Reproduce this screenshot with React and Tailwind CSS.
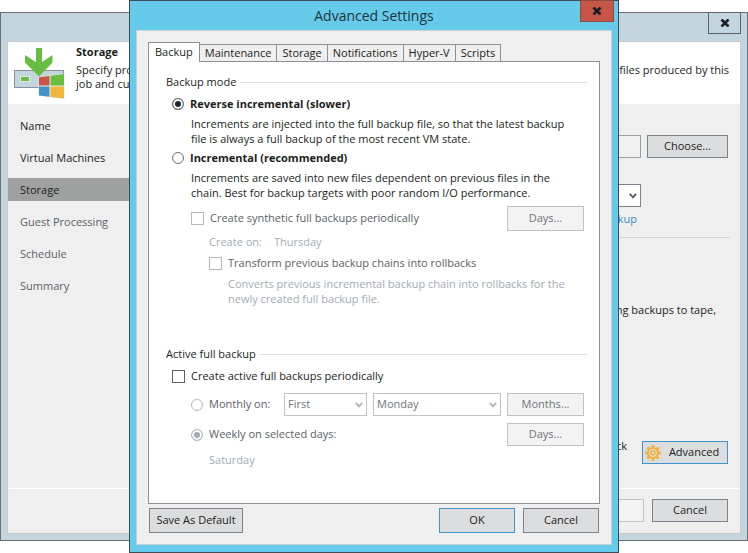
import { useState } from "react";
import clsx from "clsx";

const steps = [
  { name: "Name", state: "done" },
  { name: "Virtual Machines", state: "done" },
  { name: "Storage", state: "active" },
  { name: "Guest Processing", state: "pending" },
  { name: "Schedule", state: "pending" },
  { name: "Summary", state: "pending" },
];

const tabs = [
  "Backup",
  "Maintenance",
  "Storage",
  "Notifications",
  "Hyper-V",
  "Scripts",
];

function Button({ className, disabled, primary, children }) {
  return (
    <button
      disabled={disabled}
      className={clsx(
        "flex shrink-0 items-center justify-center border",
        disabled && "border-[#bfc3c6] bg-[#f3f3f3] text-[#6f7479]",
        !disabled && "bg-[#dcddde] text-[#1c1e20]",
        !disabled && (primary ? "border-[#3d94cf]" : "border-[#7c828a]"),
        className
      )}
    >
      {children}
    </button>
  );
}

function Chevron({ className }) {
  return (
    <svg
      viewBox="0 0 8 6"
      className={clsx("pointer-events-none absolute right-1 h-1.5 w-2", className)}
    >
      <path
        d="M0.8 0.8 L4 4.4 L7.2 0.8"
        fill="none"
        stroke="currentColor"
        strokeWidth="1.9"
      />
    </svg>
  );
}

function Select({ label, options, disabled, className }) {
  return (
    <div className={clsx("relative flex items-center", className)}>
      <select
        aria-label={label}
        disabled={disabled}
        className={clsx(
          "h-[23px] w-full appearance-none border bg-white pl-[3px] opacity-100",
          disabled
            ? "border-[#bfc3c6] text-[#6f7479]"
            : "border-[#7c828a] text-[#1c1e20]"
        )}
      >
        {options.map((option) => (
          <option key={option}>{option}</option>
        ))}
      </select>
      <Chevron className={disabled ? "text-[#b0b5b9]" : "text-[#5c6166]"} />
    </div>
  );
}

function Radio({ id, name, disabled, checked, onChange }) {
  return (
    <input
      id={id}
      type="radio"
      name={name}
      disabled={disabled}
      checked={checked}
      onChange={onChange}
      className="size-3 shrink-0 appearance-none rounded-full border border-[#6b7076] bg-white checked:bg-[#232527] checked:shadow-[inset_0_0_0_2px_white] disabled:border-[#b4b9bd] disabled:checked:bg-[#a3abb2]"
    />
  );
}

function Checkbox({ id, disabled }) {
  return (
    <input
      id={id}
      type="checkbox"
      disabled={disabled}
      className="size-[13px] shrink-0 appearance-none border border-[#5c6166] bg-white checked:bg-[#5c6166] checked:shadow-[inset_0_0_0_2px_white] disabled:border-[#b4b9bd]"
    />
  );
}

function GroupTitle({ className, children }) {
  return (
    <div className={clsx("flex items-center gap-1", className)}>
      <h3 className="leading-4">{children}</h3>
      <div className="h-px flex-1 bg-[#dfdfdf]" />
    </div>
  );
}

function CloseIcon() {
  return (
    <svg viewBox="0 0 10 8" className="h-2 w-2.5">
      <path
        d="M1.5 0.5 L8.5 7.5 M8.5 0.5 L1.5 7.5"
        stroke="#1c1e20"
        strokeWidth="2.7"
      />
    </svg>
  );
}

function StorageIcon() {
  return (
    <svg viewBox="0 0 52 52" className="size-[52px] shrink-0">
      <rect x="1.5" y="23.5" width="49" height="17" fill="#c3d6df" stroke="#8a8f9b" />
      <rect x="7.5" y="29.5" width="9" height="5" fill="#66bd3f" stroke="#dcebe4" />
      <path
        d="M23 1 H29 V15 L39.5 8 V15.5 L26 29.5 L12 15.5 V8 L23 15 Z"
        fill="#66bd3f"
      />
      <path d="M25.500 30 L51.500 26.500 V52 L25.500 49 Z" fill="#e6eef0" />
      <path d="M26 30.300 L36.500 29 V38.500 H26 Z" fill="#c85545" />
      <path d="M37.500 28.800 L51 27 V38.500 H37.500 Z" fill="#66bd3f" />
      <path d="M26 39.500 H36.500 V49.800 L26 48.500 Z" fill="#4592c6" />
      <path d="M37.500 39.500 H51 V51.500 L37.500 50 Z" fill="#f2b53c" />
    </svg>
  );
}

function GearIcon() {
  return (
    <svg viewBox="0 0 16 16" className="size-4" fill="none" stroke="#f2b33a">
      <circle cx="8" cy="8" r="5" strokeWidth="2.200" />
      <circle cx="8" cy="8" r="2" strokeWidth="1.500" />
      <path
        d="M8 0 V3 M8 13 V16 M0 8 H3 M13 8 H16 M2.300 2.300 L4.500 4.500 M11.500 11.500 L13.700 13.700 M2.300 13.700 L4.500 11.500 M11.500 4.500 L13.700 2.300"
        strokeWidth="2.600"
      />
    </svg>
  );
}

function WizardWindow() {
  return (
    <div className="flex flex-1 flex-col border border-[#6b6f74] bg-[#c3d6df] px-[6px] pb-[6px]">
      <div className="flex h-7 justify-end">
        <button
          aria-label="Close"
          className="-mt-px flex h-[22px] w-[33px] items-center justify-center border border-[#5c6166]"
        >
          <CloseIcon />
        </button>
      </div>

      <div className="flex flex-1 flex-col border border-[#c6cacc] bg-[#efefef]">
        {/* Step header */}
        <div className="flex h-[62px] bg-white pt-[2px] pr-[11px] pl-[5px]">
          <div className="pt-[3px]">
            <StorageIcon />
          </div>
          <div className="ml-[11px]">
            <h2 className="font-bold leading-4">Storage</h2>
            <p className="mt-[3px] leading-[14px]">
              Specify pro
              <br />
              job and cus
            </p>
          </div>
          <p className="mt-[19px] ml-auto leading-[14px]">files produced by this</p>
        </div>

        {/* Steps and settings */}
        <div className="flex flex-1">
          <nav className="flex w-36 flex-col gap-[9px] pt-[10px]">
            {steps.map((step) => (
              <a
                key={step.name}
                href="#"
                className={clsx(
                  "h-[23px] pl-3 leading-[23px]",
                  step.state === "active" && "bg-[#9fa1a1]",
                  step.state === "pending" && "text-[#5c6166]"
                )}
              >
                {step.name}
              </a>
            ))}
          </nav>

          <div className="ml-auto flex w-[142px] flex-col pt-[31px] pr-3">
            <div className="flex gap-[6px]">
              <input
                aria-label="Backup proxy"
                readOnly
                className="h-[23px] min-w-0 flex-1 border border-[#9a9fa4] bg-[#f1f1f1]"
              />
              <Button className="h-[23px] w-[81px]">Choose...</Button>
            </div>
            <Select label="Backup repository" options={[]} className="mt-[26px] mr-[87px]" />
            <a href="#" className="mt-1 mr-[91px] self-end leading-4 text-[#3a8bc4]">
              kup
            </a>
            <hr className="mt-[10px] -mr-[2px] border-[#d4d4d4]" />
            <p className="mt-16 mr-3 self-end leading-4">ng backups to tape,</p>
            <div className="mt-auto mb-6 flex items-start justify-end">
              <p className="mr-[15px] -mt-[3px] leading-4">ck</p>
              <Button primary className="h-[23px] w-[86px] gap-2 pr-[6px]">
                <GearIcon />
                Advanced
              </Button>
            </div>
          </div>
        </div>

        <div className="flex justify-end gap-2 border-t border-white pt-[10px] pr-3 pb-[11px]">
          <Button disabled className="h-[23px] w-[76px]" />
          <Button className="h-[23px] w-[76px]">Cancel</Button>
        </div>
      </div>
    </div>
  );
}

function BackupTab() {
  const [mode, setMode] = useState("reverse");

  return (
    <div className="border border-[#8b9096] bg-white pt-3 pr-3 pb-[35px] pl-[17px]">
      <GroupTitle>Backup mode</GroupTitle>
      <div className="mt-[6px] flex items-center gap-[6px] pl-[6px]">
        <Radio
          id="reverse"
          name="mode"
          checked={mode === "reverse"}
          onChange={() => setMode("reverse")}
        />
        <label htmlFor="reverse" className="font-bold leading-4">
          Reverse incremental (slower)
        </label>
      </div>
      <p className="mt-1 pl-[25px] leading-[15px]">
        Increments are injected into the full backup file, so that the latest backup
        <br />
        file is always a full backup of the most recent VM state.
      </p>
      <div className="mt-1 flex items-center gap-[6px] pl-[6px]">
        <Radio
          id="incremental"
          name="mode"
          checked={mode === "incremental"}
          onChange={() => setMode("incremental")}
        />
        <label htmlFor="incremental" className="font-bold leading-4">
          Incremental (recommended)
        </label>
      </div>
      <p className="mt-1 pl-[25px] leading-[15px]">
        Increments are saved into new files dependent on previous files in the
        <br />
        chain. Best for backup targets with poor random I/O performance.
      </p>

      <div className="mt-[6px] mr-[3px] flex items-center gap-[6px] pl-[25px] text-[#5c6166]">
        <Checkbox id="synthetic" disabled />
        <label htmlFor="synthetic">Create synthetic full backups periodically</label>
        <Button disabled className="ml-auto h-[25px] w-[77px]">
          Days...
        </Button>
      </div>
      <p className="mt-[3px] flex gap-3 pl-[43px] leading-4 text-[#a3abb2]">
        <span>Create on:</span>
        <span>Thursday</span>
      </p>
      <div className="mt-[5px] flex items-center gap-[6px] pl-[43px] text-[#5c6166]">
        <Checkbox id="transform" disabled />
        <label htmlFor="transform" className="leading-4">
          Transform previous backup chains into rollbacks
        </label>
      </div>
      <p className="mt-[5px] pl-[62px] leading-[15px] text-[#a3abb2]">
        Converts previous incremental backup chain into rollbacks for the
        <br />
        newly created full backup file.
      </p>

      <GroupTitle className="mt-10">Active full backup</GroupTitle>
      <div className="mt-[6px] flex items-center gap-[6px] pl-[6px]">
        <Checkbox id="active" />
        <label htmlFor="active" className="leading-4">
          Create active full backups periodically
        </label>
      </div>
      <div className="mt-[9px] mr-[3px] flex items-center gap-[6px] pl-[25px] text-[#5c6166]">
        <Radio id="monthly" name="active-full" disabled />
        <label htmlFor="monthly" className="w-[69px]">
          Monthly on:
        </label>
        <Select disabled label="Week" options={["First"]} className="w-[83px]" />
        <Select disabled label="Weekday" options={["Monday"]} className="flex-1" />
        <Button disabled className="h-[23px] w-[77px]">
          Months...
        </Button>
      </div>
      <div className="mt-[7px] mr-[3px] flex items-center gap-[6px] pl-[25px] text-[#5c6166]">
        <Radio id="weekly" name="active-full" disabled checked />
        <label htmlFor="weekly">Weekly on selected days:</label>
        <Button disabled className="ml-auto h-[23px] w-[77px]">
          Days...
        </Button>
      </div>
      <p className="mt-[6px] pl-[43px] leading-4 text-[#a3abb2]">Saturday</p>
    </div>
  );
}

function AdvancedSettings() {
  return (
    <div
      role="dialog"
      aria-labelledby="dialog-title"
      className="w-[490px] border border-[#3f4c55] bg-[#66caea] px-[6px] pb-[7px]"
    >
      <div className="relative flex h-[29px] items-center justify-center">
        <h1 id="dialog-title" className="text-sm text-[#1c3440]">
          Advanced Settings
        </h1>
        <button
          aria-label="Close"
          className="absolute -top-px -right-[2px] flex h-[22px] w-[34px] items-center justify-center border border-[#8d4a42] bg-[#c75648]"
        >
          <CloseIcon />
        </button>
      </div>

      <div className="border border-[#c9cfd2] bg-[#efefef] px-[11px] pt-[11px] pb-[11px]">
        <div role="tablist" className="-mb-px flex items-end">
          {tabs.map((tab) => (
            <button
              key={tab}
              role="tab"
              aria-selected={tab === "Backup"}
              className={clsx(
                "border-[#8b9096]",
                tab === "Backup"
                  ? "z-10 h-5 border-x border-t bg-white px-[6px]"
                  : "h-[18px] border-y border-r px-[5px]"
              )}
            >
              {tab}
            </button>
          ))}
        </div>
        <BackupTab />
        <div className="mx-px mt-1 flex">
          <Button className="h-[25px] w-[94px]">Save As Default</Button>
          <Button primary className="mr-2 ml-auto h-[25px] w-[76px]">
            OK
          </Button>
          <Button className="h-[25px] w-[76px]">Cancel</Button>
        </div>
      </div>
    </div>
  );
}

export default function App() {
  return (
    <div className="relative flex min-h-screen flex-col bg-white py-3 font-['Open_Sans',sans-serif] text-[11px] whitespace-nowrap text-[#1c1e20]">
      <WizardWindow />
      <div className="absolute inset-x-0 top-0 flex justify-center">
        <AdvancedSettings />
      </div>
    </div>
  );
}
